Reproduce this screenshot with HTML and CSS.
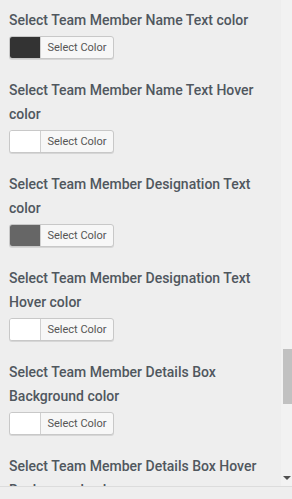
FILE: index.html
```html
<!DOCTYPE html>
<html lang="en">
<head>
  <meta charset="UTF-8">
  <meta name="viewport" content="width=device-width, initial-scale=1.0">
  <title>Team Member Colors</title>
  <link rel="stylesheet" href="styles.css">
</head>
<body>
  <div class="panel">
    <div class="options">
      <div class="option">
        <h3>Select Team Member Name Text color</h3>
        <button type="button" class="color-btn"><span class="swatch" style="background:#333333"></span><span class="label">Select Color</span></button>
      </div>
      <div class="option">
        <h3>Select Team Member Name Text Hover color</h3>
        <button type="button" class="color-btn"><span class="swatch" style="background:#ffffff"></span><span class="label">Select Color</span></button>
      </div>
      <div class="option">
        <h3>Select Team Member Designation Text color</h3>
        <button type="button" class="color-btn"><span class="swatch" style="background:#666666"></span><span class="label">Select Color</span></button>
      </div>
      <div class="option">
        <h3>Select Team Member Designation Text Hover color</h3>
        <button type="button" class="color-btn"><span class="swatch" style="background:#ffffff"></span><span class="label">Select Color</span></button>
      </div>
      <div class="option">
        <h3>Select Team Member Details Box Background color</h3>
        <button type="button" class="color-btn"><span class="swatch" style="background:#ffffff"></span><span class="label">Select Color</span></button>
      </div>
      <div class="option">
        <h3>Select Team Member Details Box Hover Background color</h3>
        <button type="button" class="color-btn"><span class="swatch" style="background:#ffffff"></span><span class="label">Select Color</span></button>
      </div>
    </div>
    <div class="scrollbar">
      <div class="thumb"></div>
      <div class="arrow"></div>
    </div>
  </div>
  <div class="footer"></div>
</body>
</html>
```

FILE: styles.css
```css
body {
  margin: 0;
  padding: 0;
  background-color: #eeeeee;
  font-family: Roboto, "Liberation Sans", sans-serif;
  color: #50575e;
}
.panel {
  display: flex;
  height: 486px;
  overflow: hidden;
  border-bottom: 1px solid #dcdcdc;
}
.options {
  flex: 1;
  padding: 8px 10px 0 9px;
}
.option {
  margin-bottom: 19px;
}
.option h3 {
  margin: 0 0 4px;
  font-size: 14px;
  font-weight: 500;
  line-height: 24px;
}
.color-btn {
  display: flex;
  align-items: stretch;
  height: 23px;
  padding: 0;
  border: 1px solid #c8c8c8;
  border-radius: 3px;
  background-color: #f7f7f7;
  box-shadow: 0 1px 0 #d6d6d6;
  overflow: hidden;
  cursor: pointer;
  font-family: Roboto, "Liberation Sans", sans-serif;
}
.swatch {
  width: 30px;
  border-right: 1px solid #d0d0d0;
}
.label {
  width: 72px;
  font-size: 11px;
  line-height: 21px;
  color: #555;
  text-align: center;
}
.scrollbar {
  width: 11px;
  display: flex;
  flex-direction: column;
  align-items: flex-end;
  background-color: #f2f2f2;
}
.thumb {
  width: 9px;
  height: 55px;
  margin-top: 349px;
  background-color: #c1c1c1;
}
.arrow {
  margin-top: auto;
  margin-bottom: 6px;
  margin-right: 1px;
  width: 0;
  height: 0;
  border-left: 4px solid transparent;
  border-right: 4px solid transparent;
  border-top: 4px solid #505050;
}
.footer {
  height: 12px;
}
```
